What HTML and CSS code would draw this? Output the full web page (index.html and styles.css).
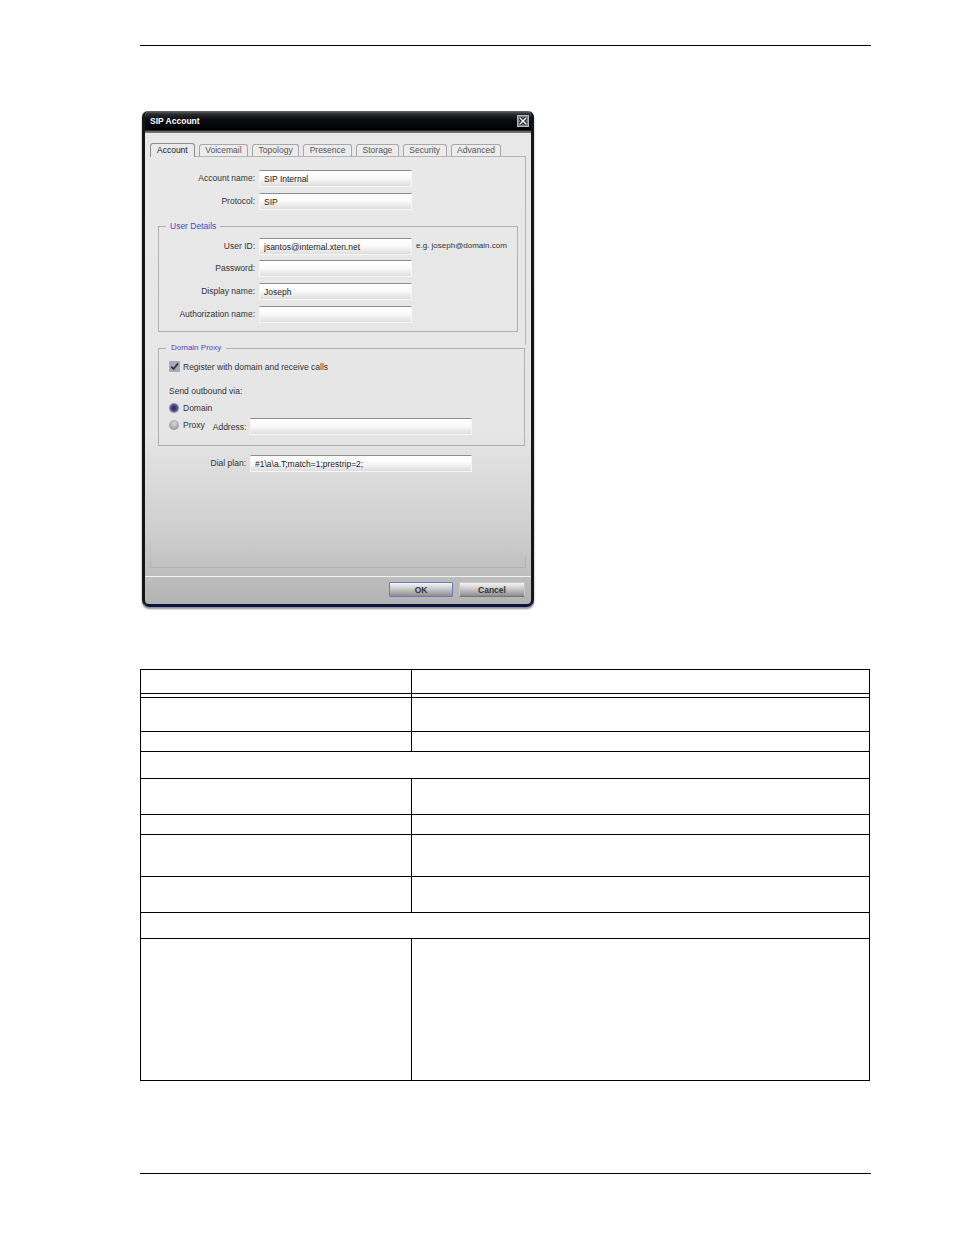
FILE: index.html
```html
<!DOCTYPE html>
<html lang="en">
<head>
    <meta charset="UTF-8">
    <meta name="viewport" content="width=device-width, initial-scale=1.0">
    <title>SIP Account</title>
    <link rel="stylesheet" href="styles.css">
</head>
<body>
    <div class="page">
        <hr class="rule">

        <div class="window">
            <div class="titlebar">
                <span class="title">SIP Account</span>
                <svg class="close" width="12" height="12" viewBox="0 0 12 12">
                    <rect x="0.5" y="0.5" width="11" height="11" fill="#7c848c" stroke="#b4b8bc"/>
                    <path d="M3 3l6 6M9 3l-6 6" stroke="#10131a" stroke-width="3.2"/>
                    <path d="M3 3l6 6M9 3l-6 6" stroke="#fff" stroke-width="1.5"/>
                </svg>
            </div>

            <div class="content">
                <div class="tabs">
                    <div class="tab active">Account</div>
                    <div class="tab">Voicemail</div>
                    <div class="tab">Topology</div>
                    <div class="tab">Presence</div>
                    <div class="tab">Storage</div>
                    <div class="tab">Security</div>
                    <div class="tab">Advanced</div>
                </div>

                <div class="pane">
                    <div class="row">
                        <label class="label">Account name:</label>
                        <input class="field" type="text" value="SIP Internal">
                    </div>
                    <div class="row">
                        <label class="label">Protocol:</label>
                        <input class="field" type="text" value="SIP">
                    </div>

                    <fieldset class="group user-details">
                        <legend>User Details</legend>
                        <div class="row tight">
                            <label class="label">User ID:</label>
                            <input class="field" type="text" value="jsantos@internal.xten.net">
                            <span class="hint">e.g. joseph@domain.com</span>
                        </div>
                        <div class="row">
                            <label class="label">Password:</label>
                            <input class="field" type="text">
                        </div>
                        <div class="row">
                            <label class="label">Display name:</label>
                            <input class="field" type="text" value="Joseph">
                        </div>
                        <div class="row last">
                            <label class="label">Authorization name:</label>
                            <input class="field" type="text">
                        </div>
                    </fieldset>

                    <fieldset class="group domain-proxy">
                        <legend>Domain Proxy</legend>
                        <div class="option check-row">
                            <svg class="check" width="11" height="11" viewBox="0 0 11 11">
                                <rect width="11" height="11" rx="1" fill="#a9a9b0"/>
                                <path d="M2.2 5.6l2.4 2.4 4.4-5.6" fill="none" stroke="#33335f" stroke-width="1.8"/>
                            </svg>
                            <span>Register with domain and receive calls</span>
                        </div>
                        <div class="via">Send outbound via:</div>
                        <div class="option domain-row">
                            <span class="radio on"></span>
                            <span>Domain</span>
                        </div>
                        <div class="option proxy-row">
                            <span class="radio"></span>
                            <span class="proxy-name">Proxy</span>
                            <label class="address">Address:</label>
                            <input class="field wide" type="text">
                        </div>
                    </fieldset>

                    <div class="row dial-row">
                        <label class="label short">Dial plan:</label>
                        <input class="field wide" type="text" value="#1\a\a.T;match=1;prestrip=2;">
                    </div>
                </div>
            </div>

            <div class="footer">
                <button class="btn default">OK</button>
                <button class="btn">Cancel</button>
            </div>
        </div>

        <table class="spec">
            <tbody>
                <tr class="head"><td></td><td></td></tr>
                <tr class="gap"><td></td><td></td></tr>
                <tr class="h34"><td></td><td></td></tr>
                <tr class="h20"><td></td><td></td></tr>
                <tr class="h27"><td colspan="2"></td></tr>
                <tr class="h36"><td></td><td></td></tr>
                <tr class="h20"><td></td><td></td></tr>
                <tr class="h42"><td></td><td></td></tr>
                <tr class="h36"><td></td><td></td></tr>
                <tr class="h26"><td colspan="2"></td></tr>
                <tr class="h142"><td></td><td></td></tr>
            </tbody>
        </table>

        <hr class="rule bottom">
    </div>
</body>
</html>
```

FILE: styles.css
```css
body {
    margin: 0;
    background: #fff;
    font-family: "Liberation Sans", Arial, sans-serif;
}
.page {
    width: 731px;
    margin-left: 140px;
    padding-top: 45px;
}
.rule {
    height: 1px;
    margin: 0;
    border: none;
    background: #000;
}
.rule.bottom {
    margin-top: 92px;
}

/* dialog */
.window {
    display: flex;
    flex-direction: column;
    box-sizing: border-box;
    width: 392px;
    height: 496px;
    margin: 65px 0 0 2px;
    border-left: 3px solid #14161a;
    border-right: 3px solid #14161a;
    border-bottom: 3px solid #0b1440;
    border-radius: 6px 6px 7px 7px;
    background: linear-gradient(#e9e9e9 0%, #e6e6e6 65%, #cfcfcf 85%, #b3b3b3 100%);
    box-shadow: 0 2px 2px rgba(0,0,0,0.45);
    overflow: hidden;
    font-size: 8.5px;
    color: #333;
}
.titlebar {
    display: flex;
    align-items: center;
    justify-content: space-between;
    box-sizing: border-box;
    height: 22px;
    padding: 0 2px 2px 5px;
    background: linear-gradient(#6a6a6a 0, #2a2d30 3px, #0a0c10 9px, #000 19px, #555 20px, #777 21px);
}
.title {
    color: #fff;
    font-weight: bold;
}
.content {
    height: 444px;
    box-sizing: border-box;
    padding: 10px 5px 0 5px;
    border-bottom: 1px solid #f2f2f2;
}
.tabs {
    display: flex;
    gap: 4px;
    height: 13px;
}
.tab {
    box-sizing: border-box;
    height: 12px;
    margin-top: 1px;
    padding: 0 5.5px;
    border: 1px solid #a8a8a8;
    border-bottom: none;
    border-radius: 3px 3px 0 0;
    line-height: 10px;
    color: #555;
    background: #ececec;
}
.tab.active {
    position: relative;
    z-index: 1;
    height: 14px;
    margin-top: 0;
    padding: 1px 6px 0;
    border-color: #8e8e8e;
    color: #222;
    background: #e9e9e9;
}
.pane {
    box-sizing: border-box;
    height: 412px;
    padding: 13px 0 0 9px;
    border-top: 1px solid #b4b4b4;
    border-bottom: 1px solid #b4b4b4;
    background:
        linear-gradient(#b4b4b4 0 188px, transparent 188px 399px, #b4b4b4 399px) right / 1px 100% no-repeat,
        linear-gradient(transparent 0 380px, #b4b4b4 411px) left / 1px 100% no-repeat;
}

/* form rows */
.row {
    display: flex;
    align-items: center;
    gap: 4px;
    margin-bottom: 6px;
}
.row.tight {
    margin-bottom: 5px;
}
.row.last {
    margin-bottom: 0;
}
.label {
    width: 96px;
    padding-bottom: 2px;
    text-align: right;
    white-space: nowrap;
}
.label.short {
    width: 87px;
}
.field {
    box-sizing: border-box;
    width: 153px;
    height: 17px;
    padding: 0 0 0 4px;
    border: 1px solid #f6f6f6;
    border-top-color: #8c8c8c;
    border-radius: 0;
    outline: none;
    font: 8.5px "Liberation Sans", Arial, sans-serif;
    color: #222;
    background: linear-gradient(#fff 0%, #fbfbfb 45%, #dedede 100%);
}
.field.wide {
    width: 222px;
}
.hint {
    padding-bottom: 3px;
    font-size: 8px;
    white-space: nowrap;
}

/* fieldsets */
.group {
    box-sizing: border-box;
    margin: 11px 0 0 -1px;
    padding: 7px 0 8px;
    border: 1px solid #b0b0b0;
    min-width: 0;
}
.group legend {
    margin-left: 7px;
    padding: 0 4px;
    line-height: 10px;
    color: #4a4ac0;
}
.user-details {
    width: 360px;
}
.domain-proxy {
    width: 367px;
    padding: 8px 0 10px 10px;
}
.domain-proxy legend {
    margin-left: -3px;
    padding: 0 5px;
    font-size: 8px;
}
.option {
    display: flex;
    align-items: center;
    gap: 4px;
}
.check-row {
    gap: 3px;
}
.via {
    margin: 14px 0 5px;
    line-height: 11px;
}
.domain-row {
    height: 11px;
    margin-bottom: 5px;
}
.proxy-row {
    height: 17px;
}
.proxy-row .radio,
.proxy-name {
    margin-bottom: 3px;
}
.address {
    margin-left: 4px;
}
.radio {
    box-sizing: border-box;
    width: 10px;
    height: 10px;
    border-radius: 50%;
    background: radial-gradient(circle at 50% 35%, #dcdcdc, #8e8e8e 85%);
}
.radio.on {
    background: radial-gradient(circle, #2e2e78 0, #3d3d80 35%, #a5a5b5 75%);
}
.dial-row {
    margin-top: 9px;
}

/* buttons */
.footer {
    display: flex;
    justify-content: flex-end;
    gap: 6px;
    height: 27px;
    padding: 5px 6px 0 0;
    box-sizing: border-box;
}
.btn {
    box-sizing: border-box;
    width: 66px;
    height: 15px;
    padding: 0;
    border: 1px solid #c8c8c8;
    border-bottom-color: #777;
    border-radius: 1px;
    font: bold 8.5px "Liberation Sans", Arial, sans-serif;
    color: #333;
    background: linear-gradient(#f4f4f4, #cfcfcf 40%, #8e8e8e);
}
.btn.default {
    width: 64px;
    border: 1px solid #6f78c8;
}

/* table below the dialog */
.spec {
    box-sizing: border-box;
    width: 730px;
    margin-top: 62px;
    border-collapse: collapse;
    table-layout: fixed;
}
.spec td {
    padding: 0;
    border: 1px solid #000;
}
.spec td:first-child {
    width: 270px;
}
.spec .head td {
    height: 23px;
}
.spec .gap td {
    height: 3px;
}
.h20 td { height: 19px; }
.h26 td { height: 25px; }
.h27 td { height: 26px; }
.h34 td { height: 33px; }
.h36 td { height: 35px; }
.h42 td { height: 41px; }
.h142 td { height: 141px; }
```
